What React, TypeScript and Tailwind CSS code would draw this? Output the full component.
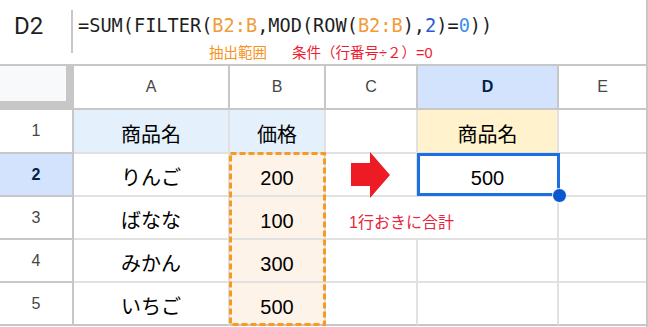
import React from "react";

const SANS = "font-['Liberation_Sans','Noto_Sans_CJK_JP',sans-serif]";

const rows = [
  { n: 1, a: "商品名", b: "価格", d: "商品名" },
  { n: 2, a: "りんご", b: "200", d: "500" },
  { n: 3, a: "ばなな", b: "100", d: "" },
  { n: 4, a: "みかん", b: "300", d: "" },
  { n: 5, a: "いちご", b: "500", d: "" },
];

const RedArrow = () => (
  <svg width="40" height="46" viewBox="0 0 40 46" className="shrink-0 overflow-visible">
    <polygon points="0,11 19,11 19,0 39,23 19,46 19,34 0,34" fill="#ed1c24" />
  </svg>
);

const App = () => {
  const colHeads = ["A", "B", "C", "D", "E"];

  return (
    <div className={`w-[648px] h-[327px] bg-white border-r-2 border-[#c7c7c7] overflow-hidden text-black ${SANS}`}>
      {/* formula bar */}
      <div className="h-[66px] flex border-b-2 border-[#c7c7c7]">
        <div className="w-[71px] flex items-start pl-[14px] pt-[12px] text-[24px] leading-[28px] font-['Roboto',sans-serif] text-[#1f1f1f]">
          D2
        </div>
        <div className="w-[2px] h-[43px] mt-[10px] bg-[#c7c7c7]" />
        <div className="pl-[5px] pt-[14px]">
          <div className="h-[24px] leading-[24px] text-[18.6px] whitespace-nowrap font-['DejaVu_Sans_Mono',monospace] text-[#1f1f1f]">
            =SUM(FILTER(<span className="text-[#f29b38]">B2:B</span>,MOD(ROW(
            <span className="text-[#f29b38]">B2:B</span>),<span className="text-[#2a5bd7]">2</span>)=
            <span className="text-[#3d8fe8]">0</span>))
          </div>
          <div className="mt-[5px] flex text-[14.5px] leading-[20px] whitespace-nowrap">
            <span className="ml-[131px] text-[#f7931e]">抽出範囲</span>
            <span className="ml-[25px] text-[#ee1c2e]">条件（行番号÷２）=0</span>
          </div>
        </div>
      </div>

      {/* sheet grid */}
      <div className="relative">
        <div className="grid grid-cols-[74px_156px_96px_92px_141px_87px] grid-rows-[44px_44px_43px_43px_43px_43px]">
          {/* corner */}
          <div className="bg-[#f8f9fa] border-r-[8px] border-b-[9px] border-[#c7c7c7]" />
          {colHeads.map((c) => (
            <div
              key={c}
              className={`flex items-center justify-center border-b-2 border-[#c7c7c7] text-[16px] ${
                c === "E" ? "" : "border-r-2"
              } ${c === "D" ? "bg-[#d3e3fd] text-[#041e49] font-bold" : "text-[#444746]"}`}
            >
              {c}
            </div>
          ))}

          {rows.map((r) => {
            const last = r.n === 5;
            const line = last ? "border-b-[#c7c7c7]" : "border-b-[#e1e1e1]";
            const cell = `flex items-end justify-center pb-[5px] text-[20px] leading-[24px] border-b-2 ${line}`;
            return (
              <React.Fragment key={r.n}>
                <div
                  className={`flex items-center justify-center text-[16px] border-r-2 border-b-2 border-[#c7c7c7] ${
                    r.n === 2 ? "bg-[#d3e3fd] text-[#041e49] font-bold" : "text-[#444746]"
                  }`}
                >
                  {r.n}
                </div>
                <div className={`${cell} border-r-2 border-r-[#e1e1e1] ${r.n === 1 ? "bg-[#e4f0fc]" : ""}`}>{r.a}</div>
                <div className={`${cell} border-r-2 border-r-[#e1e1e1] ${r.n === 1 ? "bg-[#e4f0fc]" : "bg-[#fdf3e8]"}`}>{r.b}</div>
                {r.n === 2 ? (
                  <div className="flex items-center justify-center border-r-2 border-b-2 border-[#e1e1e1]">
                    <RedArrow />
                  </div>
                ) : r.n === 3 ? (
                  <div className={`flex items-end pl-[23px] pb-[5px] text-[16px] leading-[20px] whitespace-nowrap text-[#e8253b] border-b-2 ${line}`}>
                    1行おきに合計
                  </div>
                ) : (
                  <div className={`border-r-2 border-r-[#e1e1e1] border-b-2 ${line}`} />
                )}
                <div className={`${cell} border-r-2 border-r-[#e1e1e1] ${r.n === 1 ? "bg-[#fff2cc]" : ""}`}>{r.d}</div>
                <div className={`border-b-2 ${line}`} />
              </React.Fragment>
            );
          })}
        </div>

        {/* copy range marquee B2:B5 */}
        <svg className="absolute left-[229px] top-[86px] pointer-events-none" width="97" height="174" viewBox="0 0 97 174">
          <rect x="1.5" y="1.5" width="94" height="171" fill="none" stroke="#f59a23" strokeWidth="3" strokeDasharray="6 3" />
        </svg>

        {/* active cell D2 */}
        <div className="absolute left-[417px] top-[87px] w-[143px] h-[43px] border-[3px] border-[#1b6fe0] pointer-events-none" />
        <div className="absolute left-[552px] top-[122px] w-[15px] h-[15px] rounded-full bg-[#0b57d0] border border-white" />
      </div>
    </div>
  );
};

export default App;
